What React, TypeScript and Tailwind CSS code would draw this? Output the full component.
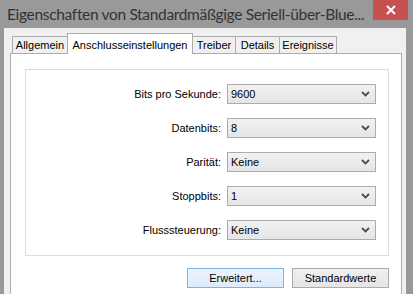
import React from 'react'

const rows = [
  { label: 'Bits pro Sekunde:', value: '9600' },
  { label: 'Datenbits:', value: '8' },
  { label: 'Parität:', value: 'Keine' },
  { label: 'Stoppbits:', value: '1' },
  { label: 'Flusssteuerung:', value: 'Keine' },
]

const tabs = [
  { name: 'Allgemein', w: 'w-[55px]' },
  { name: 'Anschlusseinstellungen', w: 'w-[126px]' },
  { name: 'Treiber', w: 'w-[43px]' },
  { name: 'Details', w: 'w-[44px]' },
  { name: 'Ereignisse', w: 'w-[57px]' },
]

function Chevron() {
  return (
    <svg width="9" height="6" viewBox="0 0 9 6" className="shrink-0">
      <path d="M1 1 L4.5 4.5 L8 1" fill="none" stroke="#4d4d4d" strokeWidth="1.8" />
    </svg>
  )
}

function Combo({ value }: { value: string }) {
  return (
    <div className="w-[149px] h-[20px] border border-[#acacac] bg-gradient-to-b from-[#f2f2f2] to-[#e5e5e5] flex items-center pl-[3px] pr-[5px]">
      <span className="flex-1 text-black">{value}</span>
      <Chevron />
    </div>
  )
}

export default function App() {
  return (
    <div
      className="w-[413px] h-[294px] overflow-hidden bg-[#999999] flex flex-col text-[11px]"
      style={{ fontFamily: '"Liberation Sans", Arial, sans-serif' }}
    >
      {/* Title bar */}
      <div className="h-[28px] flex items-start shrink-0">
        <div
          className="flex-1 min-w-0 overflow-hidden pl-[7px] pt-[3px] text-[15.5px] tracking-[-0.33px] text-[#333333] whitespace-nowrap leading-[22px]"
          style={{ fontFamily: 'Lato, "Noto Sans", sans-serif' }}
        >
          Eigenschaften von Standardmäßgige Seriell-über-Blue...
        </div>
        <div className="shrink-0 ml-[2px] mr-[5px] w-[35px] h-[20px] bg-[#c75050] flex items-center justify-center">
          <svg width="10" height="10" viewBox="0 0 10 10">
            <path d="M1 1 L9 9 M9 1 L1 9" stroke="white" strokeWidth="2" />
          </svg>
        </div>
      </div>

      {/* Window body */}
      <div className="flex-1 ml-[4px] mr-[7px] bg-[#f0f0f0] pl-[6px] pr-[4px] pt-[5px] flex flex-col">
        {/* Tabs */}
        <div className="flex items-end pl-[2px] h-[21px] relative z-10">
          {tabs.map((t, i) =>
            i === 1 ? (
              <div
                key={t.name}
                className={`${t.w} h-[21px] bg-white border border-b-0 border-[#acacac] flex justify-center pt-[3px] text-black`}
              >
                {t.name}
              </div>
            ) : (
              <div
                key={t.name}
                className={`${t.w} h-[18px] bg-[#f0f0f0] border border-[#acacac] flex items-center justify-center text-black ${i === 0 ? 'border-r-0' : 'border-l-0'}`}
              >
                {t.name}
              </div>
            )
          )}
        </div>

        {/* Tab page */}
        <div className="flex-1 -mt-px bg-white border border-[#acacac] border-b-0 pl-[14px] pr-[12px] pt-[15px]">
          <div className="h-[187px] border border-[#dcdcdc] flex flex-col gap-[14px] pt-[14px] pr-[12px]">
            {rows.map((r) => (
              <div key={r.label} className="flex items-center justify-end gap-[6px]">
                <span className="text-black">{r.label}</span>
                <Combo value={r.value} />
              </div>
            ))}
          </div>
          <div className="flex justify-end gap-[8px] mt-[12px]">
            <button className="w-[97px] h-[20px] border border-[#7eb4ea] bg-gradient-to-b from-[#ecf4fc] to-[#dcecfc] text-black">
              Erweitert...
            </button>
            <button className="w-[97px] h-[20px] border border-[#acacac] bg-gradient-to-b from-[#f0f0f0] to-[#e5e5e5] text-black">
              Standardwerte
            </button>
          </div>
        </div>
      </div>
    </div>
  )
}
